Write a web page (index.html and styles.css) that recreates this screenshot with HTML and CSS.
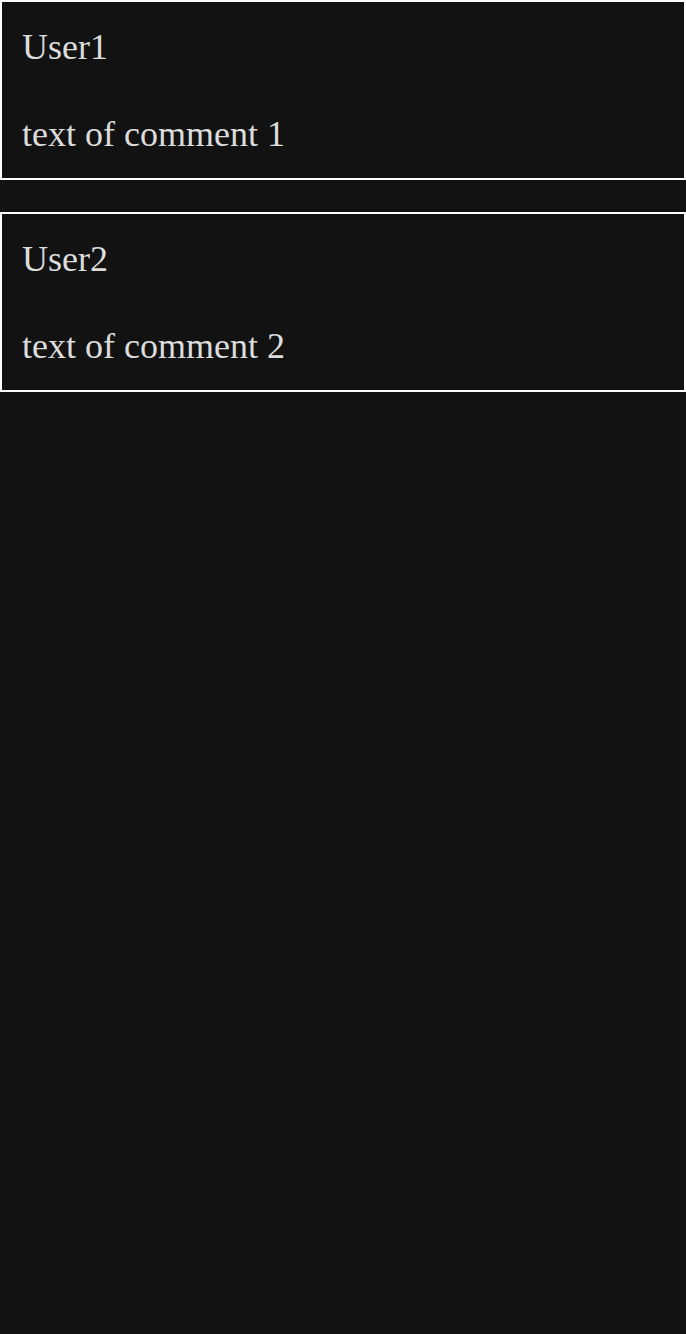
FILE: index.html
```html
<!DOCTYPE html>
<html>
<head>
<meta charset="utf-8">
<link rel="stylesheet" href="styles.css">
</head>
<body>
<div class="comments">
  <div class="comment">
    <div class="user">User1</div>
    <div class="text">text of comment 1</div>
  </div>
  <div class="comment">
    <div class="user">User2</div>
    <div class="text">text of comment 2</div>
  </div>
</div>
</body>
</html>
```
FILE: styles.css
```css
html, body {
  margin: 0;
  padding: 0;
  background: #121212;
}
body {
  font-family: "Liberation Serif", "Times New Roman", serif;
  font-size: 36px;
  color: #dcdcdc;
}
.comments {
  display: flex;
  flex-direction: column;
  gap: 32px;
}
.comment {
  border: 2px solid #ffffff;
  padding: 24px 20px;
  display: flex;
  flex-direction: column;
  gap: 45px;
  height: 176px;
  box-sizing: border-box;
  height: 180px;
}
.user, .text {
  line-height: normal;
}
```
